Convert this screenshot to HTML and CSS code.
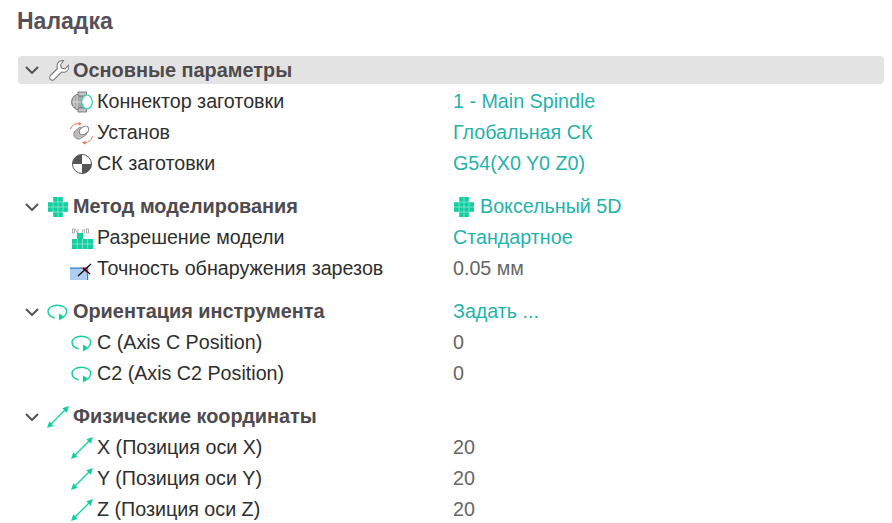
FILE: index.html
```html
<!DOCTYPE html>
<html lang="ru">
<head>
<meta charset="utf-8">
<title>Наладка</title>
<link rel="stylesheet" href="styles.css">
</head>
<body>
<svg class="defs" width="0" height="0" aria-hidden="true">
  <defs>
    <symbol id="voxel" viewBox="0 0 22 22">
      <path fill="#12cfa0" d="M6 1h10v5h5v10h-5v5H6v-5H1V6h5z"/>
      <path stroke="#fff" stroke-opacity=".55" stroke-width=".7" d="M6 1v20M11 1v20M16 1v20M1 6h20M1 11h20M1 16h20"/>
    </symbol>
    <symbol id="orient" viewBox="0 0 22 22">
      <path fill="none" stroke="#12cfa0" stroke-width="1.400" d="M7.700 16.700C3.500 16 1 13.300 1 10.300 1 6.800 5 4.300 10.300 4.300s9.400 2.600 9.400 5.700c0 2.300-1.100 4.300-2.700 5.700"/>
      <path fill="#12cfa0" d="M12 12.500l5.800 3.500L12 19.500z"/>
    </symbol>
    <symbol id="axis" viewBox="0 0 24 24">
      <path stroke="#12cfa0" stroke-width="1.300" d="M5 19L19 5"/>
      <path fill="#12cfa0" d="M23 1l-2.300 6.700-4.400-4.400zM1 23l2.300-6.700 4.400 4.400z"/>
    </symbol>
  </defs>
</svg>
<main class="panel">
  <h1 class="title">Наладка</h1>

  <section class="group">
    <div class="row head selected">
      <span class="name"><svg class="chev" viewBox="0 0 14 8"><path d="M1 1l6 6 6-6"/></svg><svg class="ico" viewBox="0 0 22 22"><path fill="#fff" stroke="#7a7a7a" stroke-width="1.100" d="M16.500 1.500C13 1 10 3.500 10 7c0 1 .2 1.500.5 2.500l-7 7c-1.300 1.500-1 3 .2 4s2.700.8 3.800-.4l7-7.100c1 .3 2 .4 3 .2 3-.6 4.800-3.500 4.200-7L18 10l-3.500-1-1-3z"/></svg><b>Основные параметры</b></span>
    </div>
    <div class="row">
      <span class="name child"><svg class="ico" viewBox="0 0 22 22"><circle cx="8.500" cy="11" r="8" fill="#a6a6a6" stroke="#666" stroke-width=".8"/><path d="M7 1h8.500v4H7zM7 17h8.500v4H7z" fill="#c4c4c4" stroke="#666" stroke-width=".8"/><path d="M3 6v10M6 4v14M1 11h9" stroke="#e6e6e6" stroke-width=".8"/><ellipse cx="16" cy="11" rx="5.300" ry="7" fill="#fff" stroke="#22d3ad" stroke-width="1.200"/></svg>Коннектор заготовки</span>
      <span class="val link">1 - Main Spindle</span>
    </div>
    <div class="row">
      <span class="name child"><svg class="ico free" viewBox="0 0 22 22"><path d="M-.5 7C.5 3.500 3.500 1.700 7 1.500M21.500 14.500C20.500 18 17.500 20.500 14 20.500" fill="none" stroke="#f0694f" stroke-width="1"/><path d="M7.500 0l3.500 1.700L7.500 3.500zM14.500 19l-3.500 1.700 3.500 1.800z" fill="#f0694f"/><path d="M9 5L4 9c-2 2-1.200 6.500 1.500 7.700 2 .7 3.500.3 5-.7l5.500-4z" fill="#bdbdbd" stroke="#777" stroke-width=".8"/><ellipse cx="13" cy="8.500" rx="5.200" ry="3.600" transform="rotate(-35 13 8.500)" fill="#fff" stroke="#777"/></svg>Установ</span>
      <span class="val link">Глобальная СК</span>
    </div>
    <div class="row">
      <span class="name child"><svg class="ico" viewBox="0 0 22 22"><circle cx="11" cy="11" r="9.500" fill="#fff" stroke="#555"/><path d="M11 1.500A9.500 9.500 0 0 0 1.500 11H11zM11 11v9.500a9.500 9.500 0 0 0 9.500-9.500z" fill="#555"/></svg>СК заготовки</span>
      <span class="val link">G54(X0 Y0 Z0)</span>
    </div>
  </section>

  <section class="group">
    <div class="row head">
      <span class="name"><svg class="chev" viewBox="0 0 14 8"><path d="M1 1l6 6 6-6"/></svg><svg class="ico"><use href="#voxel"/></svg><b>Метод моделирования</b></span>
      <span class="val link"><svg class="ico inline"><use href="#voxel"/></svg>Воксельный 5D</span>
    </div>
    <div class="row">
      <span class="name child"><svg class="ico" viewBox="0 0 22 22"><path fill="none" stroke="#999" stroke-width=".8" d="M1.500 2h2v4h-2zM4 2l2.500 4M7 2v4M12 2l-1 4M14 2l-1 4M15.500 2h2v4h-2z"/><path fill="#12cfa0" d="M6 6h6v6H6zM1 12h21v10H1z"/><path stroke="#fff" stroke-opacity=".6" stroke-width=".7" d="M6.200 12v10M11.500 12v10M16.700 12v10M1 17h21"/></svg>Разрешение модели</span>
      <span class="val link">Стандартное</span>
    </div>
    <div class="row">
      <span class="name child"><svg class="ico free" viewBox="0 0 22 22"><path fill="#aecdf2" d="M-1 10h18v12H-1z"/><path fill="#2f7fd8" d="M-1 9.500h18v1.200H-1zM16 9.500h1.200V22H16z"/><path fill="#f0505a" d="M10 9.500h7v7z"/><path stroke="#111" stroke-width="1.300" fill="none" d="M7 18L20 6M12 10l7 6"/></svg>Точность обнаружения зарезов</span>
      <span class="val">0.05 мм</span>
    </div>
  </section>

  <section class="group">
    <div class="row head">
      <span class="name"><svg class="chev" viewBox="0 0 14 8"><path d="M1 1l6 6 6-6"/></svg><svg class="ico"><use href="#orient"/></svg><b>Ориентация инструмента</b></span>
      <span class="val link">Задать ...</span>
    </div>
    <div class="row">
      <span class="name child"><svg class="ico"><use href="#orient"/></svg>C (Axis C Position)</span>
      <span class="val">0</span>
    </div>
    <div class="row">
      <span class="name child"><svg class="ico"><use href="#orient"/></svg>C2 (Axis C2 Position)</span>
      <span class="val">0</span>
    </div>
  </section>

  <section class="group">
    <div class="row head">
      <span class="name"><svg class="chev" viewBox="0 0 14 8"><path d="M1 1l6 6 6-6"/></svg><svg class="ico big"><use href="#axis"/></svg><b>Физические координаты</b></span>
    </div>
    <div class="row">
      <span class="name child"><svg class="ico big"><use href="#axis"/></svg>X (Позиция оси X)</span>
      <span class="val">20</span>
    </div>
    <div class="row">
      <span class="name child"><svg class="ico big"><use href="#axis"/></svg>Y (Позиция оси Y)</span>
      <span class="val">20</span>
    </div>
    <div class="row">
      <span class="name child"><svg class="ico big"><use href="#axis"/></svg>Z (Позиция оси Z)</span>
      <span class="val">20</span>
    </div>
  </section>
</main>
</body>
</html>
```

FILE: styles.css
```css
* {
  box-sizing: border-box;
}

html,
body {
  margin: 0;
  height: 100%;
  overflow: hidden;
  background: #fff;
}

body {
  font-family: "Liberation Sans", Arial, sans-serif;
  font-size: 19.7px;
  color: #2e2e2e;
}

.defs {
  position: absolute;
}

.panel {
  padding: 9px 8px 0 18px;
  display: flex;
  flex-direction: column;
  gap: 12px;
}

.title {
  margin: 0 0 11px -1px;
  font-size: 23px;
  line-height: 24px;
  font-weight: bold;
  color: #55505a;
}

.row {
  display: grid;
  grid-template-columns: 435px 1fr;
  align-items: center;
  height: 31px;
}

.row.selected {
  height: 28px;
  margin-bottom: 2px;
  background: #e3e3e3;
  border-radius: 4px;
}

.name {
  display: flex;
  align-items: center;
  white-space: nowrap;
  padding-left: 7px;
}

.name.child {
  padding-left: 53px;
}

.name b {
  font-size: 19.9px;
  color: #4e4a4e;
}

.chev {
  width: 14px;
  height: 8px;
  margin-right: 8px;
  fill: none;
  stroke: #555;
  stroke-width: 2;
  flex: none;
}

.ico {
  width: 22px;
  height: 22px;
  margin-right: 4px;
  flex: none;
}

.ico.free {
  overflow: visible;
}

.ico.big {
  width: 24px;
  height: 24px;
  margin-left: -1px;
  margin-right: 3px;
}

.val {
  color: #666;
  white-space: nowrap;
  display: flex;
  align-items: center;
}

.val.link {
  color: #1fb3ab;
}

.ico.inline {
  margin-left: 0;
  margin-right: 5px;
}
```
